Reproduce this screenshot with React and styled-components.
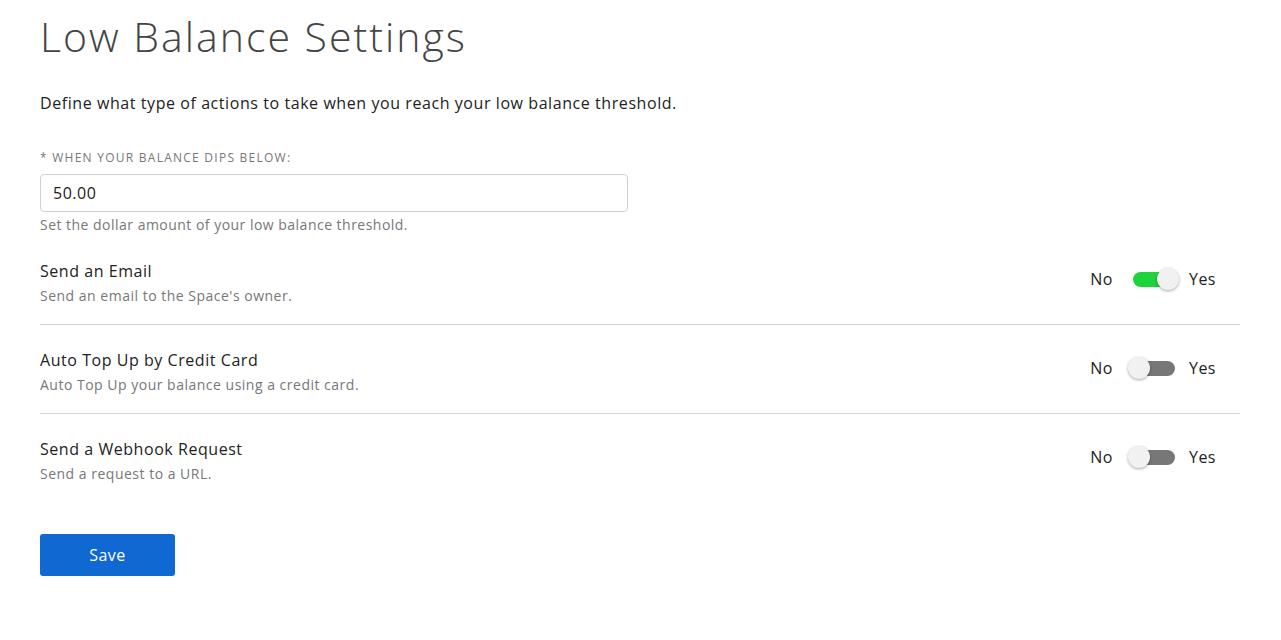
import React, { useState } from "react";
import styled, { createGlobalStyle } from "styled-components";

const GlobalStyle = createGlobalStyle`
  html, body {
    margin: 0;
    padding: 0;
    background: #ffffff;
  }
  body {
    font-family: "Open Sans", "Liberation Sans", sans-serif;
    color: #222;
    letter-spacing: 0.5px;
  }
`;

const Page = styled.div`
  padding: 8px 41px 0 40px;
  width: 1200px;
`;

const Title = styled.h1`
  margin: 0;
  font-size: 41px;
  font-weight: 300;
  color: #444;
  line-height: 56px;
  letter-spacing: 2px;
`;

const Intro = styled.p`
  margin: 28px 0 0;
  font-size: 16px;
  line-height: 22px;
  color: #222;
  letter-spacing: 0.57px;
`;

const Field = styled.div`
  margin-top: 36px;
  display: flex;
  flex-direction: column;
`;

const Label = styled.label`
  font-size: 12px;
  line-height: 16px;
  color: #777;
  text-transform: uppercase;
  letter-spacing: 1.25px;
`;

const Input = styled.input`
  margin-top: 8px;
  box-sizing: border-box;
  width: 588px;
  height: 38px;
  padding: 0 12px;
  border: 1px solid #d0d0d0;
  border-radius: 4px;
  font-family: inherit;
  font-size: 16px;
  letter-spacing: 0.5px;
  color: #222;
  outline: none;
`;

const Help = styled.div`
  margin-top: 3px;
  font-size: 14px;
  line-height: 20px;
  color: #777;
  letter-spacing: 0.48px;
`;

const List = styled.div`
  margin-top: 25px;
`;

const Row = styled.div`
  display: flex;
  align-items: center;
  justify-content: space-between;
  padding: ${(p) => (p.first ? "0" : "24px")} 24px 18px 0;
  border-bottom: ${(p) => (p.last ? "none" : "1px solid #d6d6d6")};
`;

const RowText = styled.div`
  display: flex;
  flex-direction: column;
  gap: 4px;
`;

const RowTitle = styled.div`
  font-size: 16px;
  line-height: 22px;
  color: #222;
  letter-spacing: 0.55px;
`;

const RowSub = styled.div`
  font-size: 14px;
  line-height: 20px;
  color: #777;
  letter-spacing: 0.5px;
`;

const SwitchWrap = styled.div`
  display: flex;
  align-items: center;
  margin-bottom: 8px;
  font-size: 16px;
  color: #222;
  letter-spacing: 0.5px;
`;

const Track = styled.button`
  position: relative;
  width: 52px;
  height: 24px;
  margin: 0 9px 0 15px;
  padding: 0;
  border: none;
  background: transparent;
  cursor: pointer;

  &::before {
    content: "";
    position: absolute;
    left: 5px;
    width: 42px;
    top: 5px;
    height: 15px;
    border-radius: 8px;
    background: ${(p) => (p.on ? "#1fd33c" : "#777777")};
  }
`;

const Knob = styled.span`
  position: absolute;
  top: 1px;
  left: ${(p) => (p.on ? "29px" : "0px")};
  width: 22px;
  height: 22px;
  border-radius: 50%;
  background: #f1f1f1;
  box-shadow: 0 1px 3px rgba(0, 0, 0, 0.35);
`;

const SaveButton = styled.button`
  margin-top: 32px;
  width: 135px;
  height: 42px;
  border: none;
  border-radius: 3px;
  background: #1068d2;
  color: #fff;
  font-family: inherit;
  font-size: 16px;
  letter-spacing: 0.5px;
  cursor: pointer;
`;

const Toggle = ({ on, onChange }) => (
  <SwitchWrap>
    <span>No</span>
    <Track on={on} onClick={onChange}>
      <Knob on={on} />
    </Track>
    <span>Yes</span>
  </SwitchWrap>
);

const actions = [
  { id: "email", title: "Send an Email", sub: "Send an email to the Space's owner.", on: true },
  { id: "card", title: "Auto Top Up by Credit Card", sub: "Auto Top Up your balance using a credit card.", on: false },
  { id: "hook", title: "Send a Webhook Request", sub: "Send a request to a URL.", on: false },
];

export default function App() {
  const [state, setState] = useState(
    actions.reduce((acc, a) => ({ ...acc, [a.id]: a.on }), {})
  );
  const [amount, setAmount] = useState("50.00");

  return (
    <Page>
      <GlobalStyle />
      <Title>Low Balance Settings</Title>
      <Intro>Define what type of actions to take when you reach your low balance threshold.</Intro>
      <Field>
        <Label>* When your balance dips below:</Label>
        <Input value={amount} onChange={(e) => setAmount(e.target.value)} />
        <Help>Set the dollar amount of your low balance threshold.</Help>
      </Field>
      <List>
        {actions.map((a, i) => (
          <Row key={a.id} first={i === 0} last={i === actions.length - 1}>
            <RowText>
              <RowTitle>{a.title}</RowTitle>
              <RowSub>{a.sub}</RowSub>
            </RowText>
            <Toggle
              on={state[a.id]}
              onChange={() => setState({ ...state, [a.id]: !state[a.id] })}
            />
          </Row>
        ))}
      </List>
      <SaveButton>Save</SaveButton>
    </Page>
  );
}
